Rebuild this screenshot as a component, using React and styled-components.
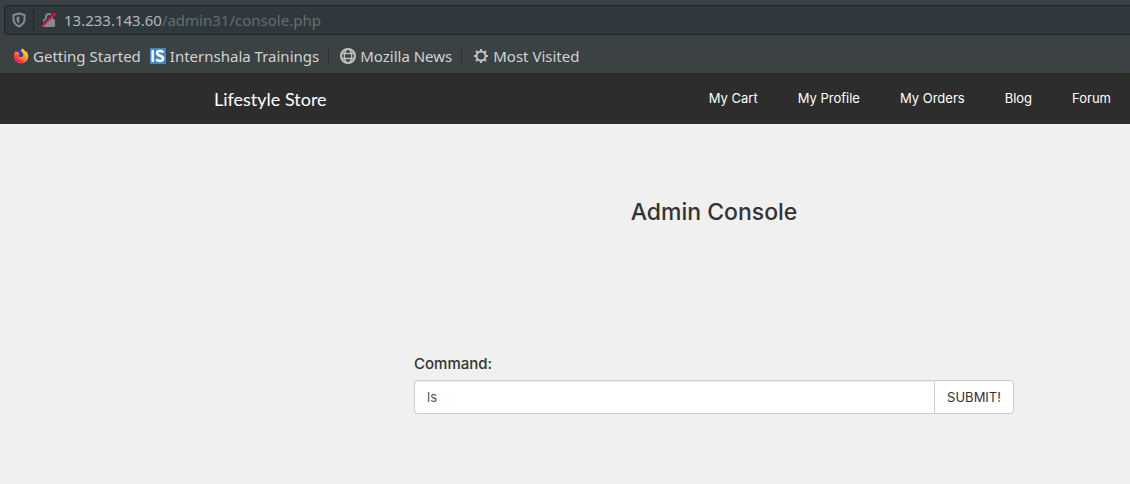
import React from "react";
import styled, { createGlobalStyle } from "styled-components";

const GlobalStyle = createGlobalStyle`
  *, *::before, *::after { box-sizing: border-box; }
  body {
    margin: 0;
    background: #f0f0f0;
    color: #333;
    font-family: Inter, "Liberation Sans", sans-serif;
  }
`;

const Chrome = styled.header`
  padding: 5px 0 0 4px;
  background: #3c4143;
  border-bottom: 1px solid #252829;
  font-family: "Noto Sans", sans-serif;
`;

const AddressBar = styled.div`
  display: flex;
  align-items: center;
  height: 30px;
  padding-left: 7px;
  background: #2f393d;
  border: 1px solid #1e2528;
  border-right: 0;
  border-radius: 4px 0 0 4px;
`;

const AddressDivider = styled.span`
  width: 1px;
  height: 22px;
  margin: 0 7px;
  background: #1e2528;
`;

const Url = styled.div`
  margin-left: 7px;
  font-size: 15px;
  line-height: 20px;
  color: #676c6d;
`;

const Host = styled.span`
  color: #b3b8b8;
`;

const Bookmarks = styled.nav`
  display: flex;
  align-items: center;
  height: 38px;
  padding: 4px 0 0 9px;
`;

const Bookmark = styled.a`
  display: flex;
  align-items: center;
  gap: 4px;
  margin-right: 9px;
  font-size: 15px;
  line-height: 20px;
  color: #d0d5d1;
  text-decoration: none;
  white-space: nowrap;
`;

const BookmarkDivider = styled.span`
  width: 1px;
  height: 18px;
  margin-right: 11px;
  background: #2b3032;
`;

const Icon = styled.svg`
  display: block;
  flex: none;
`;

const SiteBar = styled.div`
  display: flex;
  align-items: center;
  justify-content: space-between;
  height: 50px;
  padding: 0 19px 0 214px;
  background: #2d2d2d;
`;

const Brand = styled.a`
  font-family: Lato, "Liberation Sans", sans-serif;
  font-size: 18px;
  line-height: 20px;
  color: #fff;
  text-decoration: none;
`;

const SiteNav = styled.nav`
  display: flex;
  gap: 40px;
  padding-bottom: 2px;
`;

const NavLink = styled.a`
  font-size: 13px;
  line-height: 20px;
  color: #fff;
  text-decoration: none;
`;

const Main = styled.main`
  padding: 73px 116px 70px 414px;
`;

const Title = styled.h1`
  margin: 0 0 127px;
  font-size: 23px;
  font-weight: 500;
  line-height: 30px;
  text-align: center;
`;

const Label = styled.label`
  display: block;
  margin-bottom: 6px;
  font-size: 15px;
  font-weight: 500;
  line-height: 20px;
`;

const InputGroup = styled.div`
  display: flex;
  height: 34px;
`;

const CommandInput = styled.input`
  flex: 1;
  min-width: 0;
  padding: 6px 12px;
  background: #fff;
  border: 1px solid #ccc;
  border-right: 0;
  border-radius: 4px 0 0 4px;
  box-shadow: inset 0 1px 1px rgba(0, 0, 0, 0.075);
  font-family: inherit;
  font-size: 13px;
  line-height: 20px;
  color: #555;
`;

const SubmitButton = styled.button`
  padding: 6px 12px;
  background: #fff;
  border: 1px solid #ccc;
  border-radius: 0 4px 4px 0;
  font-family: inherit;
  font-size: 13px;
  line-height: 20px;
  color: #333;
`;

const ShieldIcon = () => (
  <Icon width="14" height="16" viewBox="0 0 14 16" aria-hidden="true">
    <path d="M7 1.500 12.500 3v4.600c0 3-2.300 5.300-5.500 6.900-3.200-1.600-5.500-3.900-5.500-6.900V3z" fill="none" stroke="#858a8c" strokeWidth="2" strokeLinejoin="round" />
    <path d="M7.300 4.500v7C5.600 10.500 4.600 9.200 4.600 7.500V5z" fill="#858a8c" />
  </Icon>
);

const InsecureIcon = () => (
  <Icon width="16" height="16" viewBox="0 0 16 16" aria-hidden="true">
    <path d="M5 7V5a3 3 0 0 1 6 0v2" fill="none" stroke="#858a8c" strokeWidth="2" />
    <rect x="2" y="7" width="12" height="8" rx="1" fill="#858a8c" />
    <path d="M.4 13.600 13 1" stroke="#2f393d" strokeWidth="2" />
    <path d="M1.200 14.400 14.400 1.200" stroke="#f00b43" strokeWidth="2" />
  </Icon>
);

const FirefoxIcon = () => (
  <Icon width="16" height="16" viewBox="0 0 16 16" aria-hidden="true">
    <defs>
      <linearGradient id="flame" x1="0.850" y1="0.100" x2="0.200" y2="0.900">
        <stop offset="0" stopColor="#ffe526" />
        <stop offset="0.450" stopColor="#ff9a16" />
        <stop offset="0.800" stopColor="#ff3440" />
        <stop offset="1" stopColor="#e9207c" />
      </linearGradient>
    </defs>
    <circle cx="8" cy="7.500" r="6" fill="#3b35c8" />
    <path d="M9 .4c2.200 1.100 3 2.200 3.600 3.300l.8-.3c1.300 1.600 1.800 3.300 1.800 5A7.200 7.200 0 0 1 .8 8.600c0-2.200.6-4 1.800-5.500l.3 1.200c.9-.6 1.900-.7 3-.3-.5.400-.8.900-.8 1.500l1.800.5c-.1.800-1.400 1-1.500 1.600.5 1.500 2 2.100 3.500 1.500 1.900-.7 2-3.400.4-4.500C7.600 3.500 8 1.700 9 .4z" fill="url(#flame)" />
    <path d="M5.300 8.300c.8 1.700 3 2 4.400.5-.5 2.200-3.500 2.700-4.400-.5z" fill="#ffb51c" />
  </Icon>
);

const InternshalaIcon = () => (
  <Icon width="16" height="16" viewBox="0 0 16 16" aria-hidden="true">
    <rect width="16" height="16" fill="#4289c4" />
    <path d="M2.700 2v12" stroke="#fff" strokeWidth="2.400" />
    <path d="M13.400 4.200C11.200 2.400 7.100 2.600 7.100 5.100c0 3.400 6 2 6 5.400 0 2.800-4.300 3.100-7 1" fill="none" stroke="#fff" strokeWidth="2.500" />
  </Icon>
);

const GlobeIcon = () => (
  <Icon width="16" height="16" viewBox="0 0 16 16" aria-hidden="true">
    <g fill="none" stroke="#bcc2bf">
      <circle cx="8" cy="8" r="7" strokeWidth="2" />
      <ellipse cx="8" cy="8" rx="3.700" ry="7" strokeWidth="1.400" />
      <path d="M2 5.500h12M2 10.500h12" strokeWidth="1.300" />
    </g>
  </Icon>
);

const GearIcon = () => (
  <Icon width="16" height="16" viewBox="0 0 16 16" aria-hidden="true">
    <g fill="none" stroke="#bcc2bf">
      <circle cx="8" cy="8" r="4.500" strokeWidth="2" />
      <path d="M8 1v3M8 12v3M1 8h3M12 8h3M3 3l2 2M11 11l2 2M3 13l2-2M11 5l2-2" strokeWidth="2" />
    </g>
  </Icon>
);

const links = ["My Cart", "My Profile", "My Orders", "Blog", "Forum"];

export default function App() {
  return (
    <>
      <GlobalStyle />
      <Chrome>
        <AddressBar>
          <ShieldIcon />
          <AddressDivider />
          <InsecureIcon />
          <Url><Host>13.233.143.60</Host>/admin31/console.php</Url>
        </AddressBar>
        <Bookmarks aria-label="Bookmarks">
          <Bookmark href="#"><FirefoxIcon />Getting Started</Bookmark>
          <Bookmark href="#"><InternshalaIcon />Internshala Trainings</Bookmark>
          <BookmarkDivider />
          <Bookmark href="#"><GlobeIcon />Mozilla News</Bookmark>
          <BookmarkDivider />
          <Bookmark href="#"><GearIcon />Most Visited</Bookmark>
        </Bookmarks>
      </Chrome>
      <SiteBar>
        <Brand href="#">Lifestyle Store</Brand>
        <SiteNav aria-label="Site">
          {links.map((name) => (
            <NavLink key={name} href="#">{name}</NavLink>
          ))}
        </SiteNav>
      </SiteBar>
      <Main>
        <Title>Admin Console</Title>
        <form onSubmit={(event) => event.preventDefault()}>
          <Label htmlFor="command">Command:</Label>
          <InputGroup>
            <CommandInput id="command" type="text" defaultValue="ls" />
            <SubmitButton type="submit">SUBMIT!</SubmitButton>
          </InputGroup>
        </form>
      </Main>
    </>
  );
}
